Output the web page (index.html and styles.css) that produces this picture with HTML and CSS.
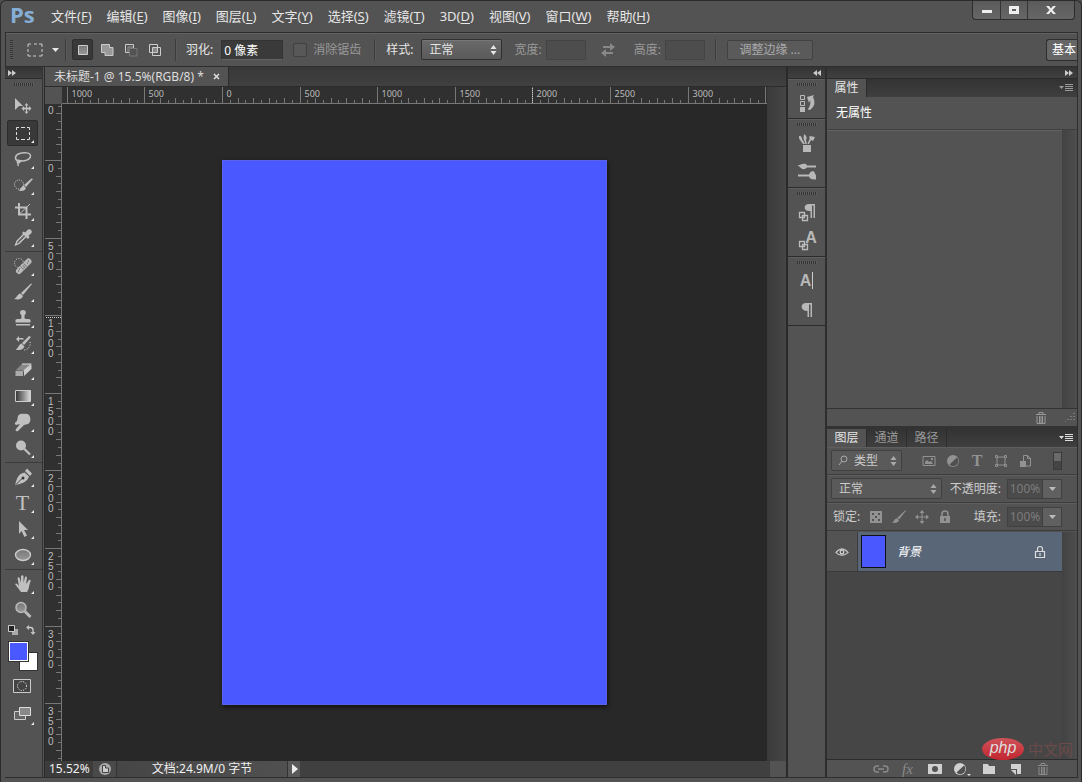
FILE: index.html
```html
<!DOCTYPE html>
<html lang="zh-CN">
<head>
<meta charset="utf-8">
<title>未标题-1 - Ps</title>
<link rel="stylesheet" href="styles.css">
</head>
<body>
<svg class="defs" aria-hidden="true">
  <defs>
    <symbol id="updown" viewBox="0 0 7 10"><path d="M3.5 0L6.5 4H.5zM3.5 10L.5 6h6z"/></symbol>
    <symbol id="down" viewBox="0 0 7 4"><path d="M0 0h7L3.500 4z"/></symbol>
    <symbol id="forward" viewBox="0 0 8 6"><path d="M0 0l4 3-4 3zM4 0l4 3-4 3z"/></symbol>
    <symbol id="panelmenu" viewBox="0 0 14 9"><path d="M0 2h5L2.500 5zM6 0h8v1H6zM6 2h8v1H6zM6 4h8v1H6zM6 6h8v1H6z"/></symbol>
    <symbol id="trash" viewBox="0 0 12 13"><path d="M1 3.500h10M4 3V1.500h4V3M2 5v7.500h8V5M4.500 5v7M6 5v7M7.500 5v7" fill="none" stroke="currentColor"/></symbol>
    <symbol id="brush" viewBox="0 0 20 20"><path d="M19 2L10 13l-2-2L18 1.500zM7.500 11.500l2.500 2.500c-1 3-4 4-9 3 3-1 3-5 6.500-5.500z"/></symbol>
    <symbol id="lock" viewBox="0 0 12 14"><path d="M3 6V4a3 3 0 0 1 6 0v2" fill="none" stroke="currentColor" stroke-width="1.500"/><path d="M1 6h10v7H1zm4.200 2v3h1.600V8z" fill-rule="evenodd"/></symbol>
    <symbol id="move4" viewBox="0 0 14 14"><path d="M7 0l2.500 3h-2v3.500H11v-2L14 7l-3 2.500v-2H7.500V11h2L7 14l-2.500-3h2V7.500H3v2L0 7l3-2.500v2h3.500V3h-2z"/></symbol>
    <symbol id="adjust" viewBox="0 0 14 14"><circle cx="7" cy="7" r="6"/><path d="M3.500 10.500A5 5 0 0 0 11 3.500z" class="hole"/></symbol>
    <linearGradient id="fade"><stop offset="0" stop-color="#333"/><stop offset="1" stop-color="#ddd"/></linearGradient>
    <linearGradient id="gray" x2="0" y2="1"><stop offset="0" stop-color="#777"/><stop offset="1" stop-color="#999"/></linearGradient>
  </defs>
</svg>
<div class="window">
  <header class="titlebar">
    <span class="logo">Ps</span>
    <nav class="menu">
      <button>文件(<u>F</u>)</button><button>编辑(<u>E</u>)</button><button>图像(<u>I</u>)</button><button>图层(<u>L</u>)</button><button>文字(<u>Y</u>)</button><button>选择(<u>S</u>)</button><button>滤镜(<u>T</u>)</button><button>3D(<u>D</u>)</button><button>视图(<u>V</u>)</button><button>窗口(<u>W</u>)</button><button>帮助(<u>H</u>)</button>
    </nav>
    <div class="winbuttons">
      <button aria-label="最小化"><svg width="12" height="10"><path d="M1 5h10v3H1z"/></svg></button>
      <button aria-label="最大化"><svg width="12" height="10"><path d="M1 1h10v8H1zm3 3v2h4V4z" fill-rule="evenodd"/></svg></button>
      <button class="close" aria-label="关闭"><svg width="12" height="10"><path d="M1 1h3l2 2.500L8 1h3L7.500 5 11 9H8L6 6.500 4 9H1l3.500-4z"/></svg></button>
    </div>
  </header>

  <div class="options">
    <span class="vgrip"></span>
    <button class="preset" aria-label="选框工具"><svg width="16" height="14"><path d="M1 4V1h3M7 1h3M12 1h3v3M15 6v3M15 11v2h-3M9 13H6M4 13H1v-2M1 9V6" fill="none" stroke="#ccc"/></svg><svg width="7" height="4"><use href="#down"/></svg></button>
    <span class="vsep"></span>
    <div class="modes">
      <button class="pressed" aria-label="新选区"><svg width="14" height="14"><path d="M2.500 2.500h9v9h-9z" fill="url(#gray)" stroke="#ccc"/></svg></button>
      <button aria-label="添加到选区"><svg width="14" height="14"><path d="M1.500 1.500h8v3h3.500v8H5v-3H1.500z" fill="#999" stroke="#ccc"/></svg></button>
      <button aria-label="从选区减去"><svg width="14" height="14"><path d="M5 9.500H1.500v-8h8V5" fill="none" stroke="#ccc"/><path d="M5.500 5.500H13v7.500H5.500z" fill="none" stroke="#777"/><path d="M4 9V4h5" stroke="#999" fill="none"/></svg></button>
      <button aria-label="与选区交叉"><svg width="14" height="14"><path d="M1.500 1.500h8v8h-8zM4.500 4.500h8v8h-8z" fill="none" stroke="#ccc"/><path d="M5 5h4v4H5z" fill="#888"/></svg></button>
    </div>
    <span class="vsep"></span>
    <label class="feather">羽化: <input type="text" value="0 像素"></label>
    <label class="check dim"><input type="checkbox" disabled> 消除锯齿</label>
    <span class="vsep"></span>
    <label class="style">样式: <span class="select"><select><option>正常</option></select><svg width="7" height="10"><use href="#updown"/></svg></span></label>
    <label class="dim size">宽度: <input type="text" disabled></label>
    <button class="swap" aria-label="互换" disabled><svg width="16" height="14"><path d="M3 3h7V0l5 4-5 4V5H3zM13 9H6V6L1 10l5 4v-3h7z"/></svg></button>
    <label class="dim size">高度: <input type="text" disabled></label>
    <span class="vsep"></span>
    <button class="refine" disabled>调整边缘 ...</button>
    <button class="workspace">基本</button>
  </div>

  <main class="body">
    <aside class="tools">
      <div class="strip"><svg width="8" height="6"><use href="#forward"/></svg></div>
      <span class="hgrip"></span>
      <div class="group">
        <button class="tool plain" aria-label="移动"><svg viewBox="0 0 20 20"><path d="M2 1l8 8H6l-4 4z"/><path d="M13.500 6l2 2.500H14v2h2V9l2.500 2.500L16 14v-1.500h-2v2h1.500l-2 2.500-2-2.500H13v-2h-2V14l-2.500-2.500L11 9v1.500h2v-2h-1.500z"/></svg></button>
        <button class="tool on" aria-label="矩形选框"><svg viewBox="0 0 20 20"><path d="M3.500 7V4.500H6M8 4.500h4M14 4.500h2.500V7M16.500 9v3M16.500 14v2.500H14M12 16.500H8M6 16.500H3.500V14M3.500 12V9" fill="none" stroke="#ddd"/></svg></button>
        <button class="tool" aria-label="套索"><svg viewBox="0 0 20 20"><path d="M5 12C1 10 2 6 6.500 4.500s11-1 11 2.500S11 13 6.500 11.500C4 10.500 4 13 5.500 13.500S8 12 5 12c-2 .5 1 3 0 5" fill="none" stroke="#c0c0c0" stroke-width="1.500"/></svg></button>
        <button class="tool" aria-label="快速选择"><svg viewBox="0 0 20 20"><circle cx="6" cy="9.500" r="4.500" fill="none" stroke="#ddd" stroke-dasharray="1 1.300"/><path d="M20 4l-7 8-2-2 7.500-6.500zM10.500 10.500l2.500 2.500c-1 3-4 3.500-8 2.500 3-.5 3-4 5.500-5z"/></svg></button>
        <button class="tool" aria-label="裁剪"><svg viewBox="0 0 20 20"><path d="M6 2v11.500h12M2 6.500h11.500V18" fill="none" stroke="#c0c0c0" stroke-width="2"/><path d="M6 13.500L17 3" stroke="#c0c0c0"/></svg></button>
        <button class="tool" aria-label="吸管"><svg viewBox="0 0 20 20"><path d="M11 7L4 14l-1.500 4L6 16.500l7-7" fill="#666" stroke="#ccc" stroke-width="1.200"/><path d="M9 6l1.500-1.500 2 1C14 3 16 1 18 3s0 4-2.500 5.500l1 1.500L15 12z"/></svg></button>
      </div>
      <div class="group">
        <button class="tool" aria-label="污点修复画笔"><svg viewBox="0 0 20 20"><circle cx="6" cy="7" r="4.500" fill="none" stroke="#ddd" stroke-dasharray="1 1.500"/><path d="M6 15L15.500 5.500" stroke="#b8b8b8" stroke-width="6" stroke-linecap="round"/><path d="M7.500 10.500l3.500 3M10.500 7.500l3.500 3" stroke="#777"/><path d="M5 15h1M15 5h1M10 10h1M11 11h1M14 7h1M6 13h1" stroke="#555"/></svg></button>
        <button class="tool" aria-label="画笔"><svg viewBox="0 0 20 20"><use href="#brush"/></svg></button>
        <button class="tool" aria-label="仿制图章"><svg viewBox="0 0 20 20"><path d="M8.500 10V7.500C6 5 7 2 10 2s4 3 1.500 5.500V10C12 12 17 10 17.500 12v2.500h-15V12C3 10 8 12 8.500 10zM3 16h14v1.500H3z"/></svg></button>
        <button class="tool" aria-label="历史记录画笔"><svg viewBox="0 0 20 20"><path d="M18 3l-7 8-2-2 7-7zM8.500 9.500l3 3c-2 4-5 4-9 3 3-1 3-5 6-6zM3 5l3-3v2h4l1 1.500H6V8z"/><path d="M17 8c1 4-2 8-6 8" fill="none" stroke="#ddd" stroke-dasharray="1 1.500"/></svg></button>
        <button class="tool" aria-label="橡皮擦"><svg viewBox="0 0 20 20"><path d="M9 4h9l-7 6.500H2.500z" fill="#888"/><path d="M2.500 11H10v5H2.500z" fill="#aaa"/><path d="M11 10.500L18.500 4.500V9L11 16z" fill="#ccc"/><path d="M9 4h9.200M10.500 10.800l7.700-6.500" stroke="#ddd" fill="none"/></svg></button>
        <button class="tool" aria-label="渐变"><svg viewBox="0 0 20 20"><path d="M2.500 4.500h15v11h-15z" fill="url(#fade)" stroke="#ccc"/></svg></button>
        <button class="tool" aria-label="涂抹"><svg viewBox="0 0 20 20"><path d="M5 4c2-3 5-2 6-2 3-1 6 1 6 3 1 3 0 6-2 7l-4 1-6 6c-2 1-3-1-2-2l4-5-4 1c-2-1-1-3 1-4z"/></svg></button>
        <button class="tool" aria-label="减淡"><svg viewBox="0 0 20 20"><circle cx="8" cy="7.500" r="5"/><path d="M11 10.500l6 6" stroke="#c0c0c0" stroke-width="2.200"/></svg></button>
      </div>
      <div class="group">
        <button class="tool" aria-label="钢笔"><svg viewBox="0 0 20 20"><path d="M11.500 5.500l4.500 4C14 15 10 16 2 18.500 4 11 5 7 11.500 5.500zM12 4l2-2.500 5 5L17 9z"/><path d="M2 18.500l7-7" stroke="#444"/><circle cx="10" cy="11" r="1.500" fill="#333"/></svg></button>
        <button class="tool letter" aria-label="文字"><span>T</span></button>
        <button class="tool" aria-label="路径选择"><svg viewBox="0 0 20 20"><path d="M6 2l9 9h-4l3 5.500-2.500 1.500-3-6L6 15z"/></svg></button>
        <button class="tool" aria-label="椭圆"><svg viewBox="0 0 20 20"><ellipse cx="10" cy="10" rx="7.500" ry="5.500" fill="url(#gray)" stroke="#ccc" stroke-width="1.300"/></svg></button>
      </div>
      <div class="group last">
        <button class="tool" aria-label="抓手"><svg viewBox="0 0 20 20"><path d="M8 18c-2-3-4-5-6-8 1-1 2-1 4 2L4.500 4c1-1 2-1 2.500 1l1 4V2c1-1 2-1 2.500 0V9l1.500-6c1-1 2 0 2 1L13 10l3-4c1-.5 2 0 1.500 1.500-2 5-1 7-3.500 10.500z"/></svg></button>
        <button class="tool plain" aria-label="缩放"><svg viewBox="0 0 20 20"><circle cx="8" cy="7.500" r="5" fill="url(#gray)" stroke="#bbb" stroke-width="1.500"/><path d="M12 11.500l5.500 5.500" stroke="#bbb" stroke-width="3"/></svg></button>
      </div>
      <div class="mini">
        <button aria-label="默认颜色"><svg width="12" height="12"><path d="M5 5h6v6H5z" fill="#aaa"/><path d="M1.500 1.500h6v6h-6z" fill="#222" stroke="#ccc"/></svg></button>
        <button aria-label="切换颜色"><svg width="12" height="12"><path d="M3 3.500h2.500Q8 3.500 8 6v2" fill="none" stroke="#ccc" stroke-width="1.300"/><path d="M4 1v5L1 3.500zM5.500 8h5L8 11z"/></svg></button>
      </div>
      <div class="swatches"><button class="bg" aria-label="背景色"></button><button class="fg" aria-label="前景色"></button></div>
      <button class="extra" aria-label="快速蒙版"><svg width="18" height="14"><path d="M.5 .5h17v13H.5z" fill="#444" stroke="#ccc"/><circle cx="9" cy="7" r="4.500" fill="none" stroke="#fff" stroke-dasharray="1 1.400"/></svg></button>
      <button class="tool screen" aria-label="屏幕模式"><svg viewBox="0 0 20 20"><path d="M1.500 7.500h11v8h-11z" fill="#666" stroke="#ccc"/><path d="M6.500 3.500h11v8h-11z" fill="#888" stroke="#ddd"/></svg></button>
    </aside>

    <section class="document">
      <div class="doctabs"><div class="doctab"><span>未标题-1 @ 15.5%(RGB/8) *</span><button aria-label="关闭文档"><svg width="7" height="7"><path d="M1 1l5 5M6 1L1 6" stroke="#ddd" stroke-width="1.500"/></svg></button></div></div>
      <div class="stage">
        <div class="corner"></div>
        <svg class="ruler across" id="across"></svg>
        <svg class="ruler along" id="along"></svg>
        <div class="canvas"><div class="artboard" id="artboard"></div></div>
        <div class="vscroll"></div>
      </div>
      <footer class="status">
        <span class="zoom">15.52%</span>
        <button class="info" aria-label="文档信息"><svg width="14" height="14"><circle cx="7" cy="7" r="6" fill="#aaa"/><path d="M4.500 3.500h3v2.500h3v4.500h-6z" fill="#ccc" stroke="#444"/></svg></button>
        <span class="docsize">文档:24.9M/0 字节</span>
        <button class="more" aria-label="更多"><svg width="7" height="10"><path d="M1 0l6 5-6 5z" fill="#eee"/></svg></button>
        <span class="hscroll"></span><span class="size-corner"></span>
      </footer>
    </section>

    <aside class="dock">
      <div class="strip"><svg class="flip" width="8" height="6"><use href="#forward"/></svg></div>
      <div class="dockgroup"><span class="hgrip"></span>
        <button aria-label="历史记录"><svg viewBox="0 0 20 20"><path d="M3.500 2.500h4v4h-4zM3.500 8.500h4v4h-4z" fill="none" stroke="#bbb"/><path d="M3 14h5v5H3zM10 4l7-2-1 2c3 6 1 10-3 13-2 0-2-1-2-1 2-3 3-6 2-9l-1 3z"/></svg></button></div>
      <div class="dockgroup"><span class="hgrip"></span>
        <button aria-label="画笔预设"><svg viewBox="0 0 20 20"><path d="M6 12h8v7H6zM2 3c3 0 3 2 3 3l3 5H6L3 7C2 6 2 5 2 3zM7 1c3 2 3 4 2 6l1 4H8.500L7 7C6 5 7 3 7 1zM18 4l-2 4-2-1-2 4h-1.500l2-5V3z"/></svg></button>
        <button aria-label="画笔"><svg viewBox="0 0 20 20"><path d="M0 3c3 1 4-2 9-1l1 1.500h9v2h-9L8 7C4 8 3 4 0 3zM1 12.500h11c1-3 3-4 5-3l2 4v4c-3 0-6 0-7-3H1z"/></svg></button></div>
      <div class="dockgroup"><span class="hgrip"></span>
        <button aria-label="段落样式"><svg viewBox="0 0 20 20"><path d="M12 2h6v14h-1.500V3.500H15V16h-1.500V9C6 10 6 2 12 2z"/><path d="M2.500 10.500h5v5h-5zM5.500 13.500h5v5h-5z" fill="none" stroke="#bbb" stroke-width="1.300"/></svg></button>
        <button aria-label="字符样式"><span class="bigA">A</span><svg viewBox="0 0 20 20"><path d="M2.500 10.500h5v5h-5zM5.500 13.500h5v5h-5z" fill="none" stroke="#bbb" stroke-width="1.300"/></svg></button></div>
      <div class="dockgroup"><span class="hgrip"></span>
        <button class="char" aria-label="字符">A<i></i></button>
        <button aria-label="段落"><svg viewBox="0 0 20 20"><path d="M9 3h6v14h-1.500V4.500H12V17h-1.500v-6C3 11 3 3 9 3z"/></svg></button></div>
    </aside>

    <aside class="panels">
      <div class="strip"><svg width="8" height="6"><use href="#forward"/></svg></div>
      <section class="panel props">
        <div class="tabs"><button class="active">属性</button><span class="pm"><svg width="14" height="9"><use href="#panelmenu"/></svg></span></div>
        <div class="none">无属性</div>
        <div class="scrollarea"><i></i></div>
        <div class="propfoot"><button aria-label="删除"><svg width="12" height="13"><use href="#trash"/></svg></button><svg width="11" height="9"><path d="M9 0v2M6 3v2M9 3v2M3 6v2M6 6v2M9 6v2M0 8v1" stroke="#888" stroke-width="1.500" stroke-dasharray="1"/></svg></div>
      </section>
      <section class="panel layers">
        <div class="tabs"><button class="active">图层</button><button>通道</button><button>路径</button><span class="pm lit"><svg width="14" height="9"><use href="#panelmenu"/></svg></span></div>
        <div class="row filter">
          <span class="select kind"><svg class="mag" width="10" height="11"><circle cx="6" cy="4" r="3" fill="none" stroke="#aaa"/><path d="M4 6L1 10" stroke="#aaa"/></svg><select aria-label="类型"><option>类型</option></select><svg width="7" height="10"><use href="#updown"/></svg></span>
          <div class="filters">
            <button aria-label="像素"><svg width="14" height="14"><path d="M1 2.500h12v9H1z" fill="none" stroke="currentColor"/><path d="M3 10V8l2-2 2 2 2-1 2 3zM9 4h2v2H9z"/></svg></button>
            <button aria-label="调整"><svg width="14" height="14"><use href="#adjust"/></svg></button>
            <button class="serif" aria-label="文字">T</button>
            <button aria-label="形状"><svg width="14" height="14"><path d="M3 3h8v8H3zM1.500 1.500h2v2h-2zM10.500 1.500h2v2h-2zM1.500 10.500h2v2h-2zM10.500 10.500h2v2h-2z" fill="none" stroke="currentColor"/></svg></button>
            <button aria-label="智能对象"><svg width="14" height="14"><path d="M5.500 7V1.500h4l3 3V12H7M9.500 1.500v3h3" fill="none" stroke="currentColor"/><path d="M2 7h6v6H2z"/></svg></button>
          </div>
          <button class="toggle" aria-label="切换滤镜"></button>
        </div>
        <div class="row">
          <span class="select blend"><select aria-label="混合模式"><option>正常</option></select><svg width="7" height="10"><use href="#updown"/></svg></span>
          <label class="pct">不透明度: <input type="text" value="100%" disabled></label><button class="drop" aria-label="不透明度滑块"><svg width="7" height="4"><use href="#down"/></svg></button>
        </div>
        <div class="row">
          <span class="locktext">锁定:</span>
          <div class="locks">
            <button aria-label="透明像素"><svg width="14" height="14"><path d="M1 1h12v12H1zM3 3v2h2V3zM9 3v2h2V3zM6 6v2h2V6zM3 9v2h2V9zM9 9v2h2V9z" fill-rule="evenodd"/></svg></button>
            <button aria-label="图像像素"><svg width="16" height="16"><use href="#brush"/></svg></button>
            <button aria-label="位置"><svg width="14" height="14"><use href="#move4"/></svg></button>
            <button aria-label="全部"><svg width="12" height="14"><use href="#lock"/></svg></button>
          </div>
          <label class="pct">填充: <input type="text" value="100%" disabled></label><button class="drop" aria-label="填充滑块"><svg width="7" height="4"><use href="#down"/></svg></button>
        </div>
        <div class="list">
          <div class="layer">
            <button class="eye" aria-label="可见性"><svg width="14" height="10"><path d="M1 5.500Q7-1.500 13 5.500 7 11 1 5.500z" fill="#444" stroke="#bbb" stroke-width="1.300"/><circle cx="7" cy="5" r="2.500"/><circle cx="7" cy="5" r="1" fill="#333"/></svg></button>
            <div class="thumb"></div><em>背景</em>
            <svg class="lk" width="12" height="14"><path d="M3.500 6V4a2.500 2.500 0 0 1 5 0v2M1.500 6.500h9v6h-9zM6 8v3" fill="none" stroke="currentColor" stroke-width="1.200"/></svg>
          </div>
          <i></i>
        </div>
        <div class="layerfoot">
          <button class="off" aria-label="链接"><svg width="16" height="10"><path d="M6 8H4a3 3 0 0 1 0-6h2M10 2h2a3 3 0 0 1 0 6h-2M5 5h6" fill="none" stroke="currentColor" stroke-width="1.500"/></svg></button>
          <button class="off fx" aria-label="样式">fx</button>
          <button aria-label="蒙版"><svg width="14" height="12"><path d="M0 1h14v10H0zM7 3a3 3 0 1 0 0 6 3 3 0 0 0 0-6z" fill-rule="evenodd"/></svg></button>
          <button class="sub" aria-label="调整图层"><svg width="14" height="14"><use href="#adjust"/></svg></button>
          <button aria-label="新建组"><svg width="14" height="12"><path d="M1 1h5l1 2h6v8H1z"/></svg></button>
          <button aria-label="新建图层"><svg width="12" height="12"><path d="M1 1h10v10H7V6H1zM1 7h5v5z"/></svg></button>
          <button class="off" aria-label="删除图层"><svg width="12" height="13"><use href="#trash"/></svg></button>
        </div>
        <div class="watermark"><span>php</span><b>中文网</b></div>
      </section>
    </aside>
  </main>
</div>
<script src="script.js"></script>
</body>
</html>
```
FILE: styles.css
```css
* { box-sizing: border-box; }
body { margin: 0; background: #4f4f4f; color: #e6e6e6; font: 12px/16px "Noto Sans", "Noto Sans CJK SC", sans-serif; }
button, input, select { font: inherit; color: inherit; margin: 0; padding: 0; border: 0; background: none; border-radius: 0; }
button { display: flex; align-items: center; justify-content: center; }
select { appearance: none; outline: 0; opacity: 1; }
svg { fill: currentColor; display: block; flex: none; }
.defs { position: absolute; width: 0; height: 0; }
.hole { fill: #505050; }
.window { display: flex; flex-direction: column; height: 100vh; min-height: 600px; border: 1px solid #2b2b2b; border-width: 1px 1px 0; border-radius: 6px 6px 0 0; padding: 0 2px 4px 3px; overflow: hidden; background: #535353; }

.titlebar { display: flex; height: 31px; align-items: stretch; }
.logo { width: 40px; padding-left: 6px; font: bold 22px/27px "Open Sans", sans-serif; color: #85aed6; }
.menu { display: flex; flex: 1; }
.menu button { padding: 0 8px 1px 7px; font-size: 13px; white-space: nowrap; }
.menu u { text-underline-offset: 2px; }
.winbuttons { display: flex; height: 19px; margin-right: 4px; border: 1px solid #2c2c2c; border-top: 0; border-radius: 0 0 4px 4px; background: linear-gradient(#5b5b5b, #666); color: #eee; }
.winbuttons button { width: 27px; }
.winbuttons button + button { border-left: 1px solid #333; }
.winbuttons .close { width: 47px; }

.options { display: flex; align-items: center; height: 35px; margin: 0 1px; border: 1px solid #2e2e2e; border-right-color: #333; box-shadow: inset 0 1px #626262; overflow: hidden; white-space: nowrap; }
.vgrip { width: 3px; height: 20px; margin: 0 14px 0 4px; background: repeating-linear-gradient(#333 0 1px, #5c5c5c 1px 2px); }
.preset { gap: 9px; }
.vsep { width: 1px; height: 22px; background: #3c3c3c; box-shadow: 1px 0 #5a5a5a; margin: 0 6px; }
.modes { display: flex; gap: 3px; margin-right: 4px; }
.modes button { width: 21px; height: 21px; }
.modes .pressed { background: #393939; border: 1px solid #2e2e2e; border-radius: 2px; }
.options label { display: flex; align-items: center; gap: 8px; }
.options input[type=text] { height: 20px; background: #3a3a3a; border: 1px solid #333; border-bottom-color: #626262; padding-left: 2px; color: #fff; }
.feather { margin-left: 4px; }
.feather input { width: 62px; }
.options .check { margin: 0 7px 0 10px; gap: 6px; }
.check input { appearance: none; width: 14px; height: 14px; border: 1px solid #404040; border-radius: 2px; background: #585858; }
.dim { color: #999; }
.style { margin-left: 5px; }
.select { display: flex; align-items: center; height: 21px; border: 1px solid #303030; border-radius: 2px; background: linear-gradient(#6a6a6a, #5a5a5a); box-shadow: inset 0 1px #777; padding: 0 4px 0 7px; }
.select select { flex: 1; min-width: 0; }
.style .select { width: 81px; }
.options .size { margin-left: 12px; gap: 4px; }
.options .size input { width: 40px; background: #4d4d4d; border-color: #444; }
.swap { color: #888; margin: 0 6px 0 14px; }
.options .size + .vsep { margin: 0 11px 0 10px; }
.refine { width: 86px; height: 20px; border: 1px solid #414141; border-radius: 2px; background: #5a5a5a; color: #aaa; }
.workspace { width: 31px; height: 22px; margin-left: auto; flex: none; padding-left: 5px; justify-content: flex-start; border: 1px solid #2e2e2e; border-right: 0; border-radius: 3px 0 0 3px; background: #666; color: #fff; }

.body { display: flex; flex: 1; min-height: 0; margin: 0 1px; border: solid #2e2e2e; border-width: 0 1px 1px 0; }
.strip { display: flex; align-items: center; height: 12px; flex: none; background: linear-gradient(#343434, #404040); border-bottom: 1px solid #2b2b2b; color: #ccc; }
.hgrip { display: block; width: 20px; height: 3px; margin: 4px auto 2px; flex: none; background: repeating-linear-gradient(90deg, #333 0 1px, #5f5f5f 1px 2px); }

.tools { width: 38px; display: flex; flex-direction: column; flex: none; border-right: 1px solid #333; color: #c0c0c0; }
.tools .strip { padding-left: 3px; }
.group { padding: 4px 2px 1px; border-bottom: 1px solid #3a3a3a; }
.tools .hgrip + .group { padding-top: 6px; }
.group + .group { padding-top: 1px; }
.group.last { border: 0; }
.tool { position: relative; width: 31px; height: 26px; border: 1px solid transparent; border-radius: 2px; }
.tool svg { width: 20px; height: 20px; }
.tool::after { content: ""; position: absolute; right: 3px; bottom: 2px; width: 0; height: 0; border-top: 3px solid transparent; border-right: 3px solid #eee; }
.tool.plain::after { display: none; }
.tool.on { background: #393939; border-color: #2c2c2c; }
.letter { font: 22px/26px "Liberation Serif", serif; }
.mini { display: flex; gap: 6px; padding: 0 2px; }
.swatches { display: grid; width: 29px; height: 29px; margin: 6px 0 0 4px; }
.swatches button { grid-area: 1 / 1; width: 19px; height: 19px; border: 1px solid #333; }
.swatches .fg { background: #4a58ff; border-color: #fff; outline: 1px solid #333; }
.swatches .bg { background: #fff; place-self: end; }
.extra { margin: 8px 0 0 8px; width: 18px; }
.screen { margin: 7px 0 0 2px; height: 28px; }

.document { flex: 1; min-width: 0; display: flex; flex-direction: column; border: solid #2a2a2a; border-width: 0 2px 0 1px; margin-left: 1px; }
.doctabs { display: flex; height: 20px; flex: none; background: linear-gradient(#383838, #404040); border-bottom: 1px solid #2c2c2c; }
.doctab { display: flex; align-items: center; gap: 9px; padding: 0 8px 0 9px; background: #535353; border-right: 1px solid #2c2c2c; font-size: 12px; color: #ddd; white-space: nowrap; }
.stage { flex: 1; min-height: 0; display: grid; grid-template: 17px minmax(0, 1fr) / 17px minmax(0, 1fr) 19px; }
.corner { background: #535353; }
.ruler { width: 100%; height: 100%; background: #303030; overflow: hidden; font: 10px "Liberation Sans", sans-serif; fill: #bbb; }
.ruler path { stroke: #777; fill: none; shape-rendering: crispEdges; }
.ruler .cursor { stroke: #ccc; stroke-dasharray: 1 1; }
.across { font: 9px "Noto Sans", sans-serif; }
.along { grid-area: 2 / 1; }
.canvas { grid-area: 2 / 2; background: #282828; display: flex; align-items: center; justify-content: center; overflow: hidden; }
.artboard { width: 385px; aspect-ratio: 385 / 545; flex: none; background: #4a58ff; border: 1px solid #5a62e8; box-shadow: 1px 2px 4px #111; }
.vscroll { grid-area: 1 / 3 / 3 / 4; background: linear-gradient(90deg, #3a3a3a, #464646); }
.status { display: flex; height: 16px; flex: none; background: #404040; color: #f0f0f0; white-space: nowrap; }
.zoom { width: 48px; padding-left: 4px; background: #3c3c3c; }
.info { width: 24px; background: #4a4a4a; border-right: 1px solid #333; }
.docsize { width: 171px; text-align: center; background: linear-gradient(90deg, #464646, #505050); border-right: 1px solid #333; }
.more { width: 12px; background: #5a5a5a; }
.hscroll { flex: 1; }
.size-corner { width: 16px; background: #535353; }

.dock { width: 39px; flex: none; border-right: 2px solid #2e2e2e; color: #b8b8b8; }
.dock .strip { justify-content: flex-end; padding-right: 4px; }
.flip { transform: scaleX(-1); }
.dockgroup { padding-bottom: 1px; border-bottom: 1px solid #2c2c2c; box-shadow: inset 0 1px #5f5f5f; display: flow-root; }
.dockgroup button { width: 37px; height: 29px; display: grid; place-items: center; }
.dockgroup svg { width: 20px; height: 20px; grid-area: 1 / 1; }
.bigA { grid-area: 1 / 1; font: bold 16px/20px "Liberation Sans", sans-serif; padding: 0 0 5px 9px; }
.dockgroup .char { display: flex; gap: 1px; font: bold 16px "Liberation Sans", sans-serif; }
.char i { width: 1px; height: 17px; background: #ccc; }

.panels { width: 250px; flex: none; display: flex; flex-direction: column; }
.panels .strip { justify-content: flex-end; padding-right: 4px; }
.panel { display: flex; flex-direction: column; min-height: 0; }
.props { flex: 347 1 0; }
.layers { flex: 348 1 0; position: relative; border-top: 3px solid #333; }
.tabs { display: flex; flex: none; height: 18px; background: linear-gradient(#333, #3f3f3f); color: #999; }
.tabs button { width: 40px; border-right: 1px solid #2c2c2c; }
.tabs .active { background: #535353; color: #e6e6e6; }
.pm { margin: 5px 4px 0 auto; }
.lit { color: #ddd; }
.none { padding: 8px 9px; height: 33px; flex: none; border-bottom: 1px solid #404040; color: #fff; }
.scrollarea, .list { flex: 1; min-height: 0; display: flex; box-shadow: inset 0 1px #626262; }
.scrollarea i, .list > i { width: 15px; margin-left: auto; background: linear-gradient(90deg, #424242, #4e4e4e); }
.propfoot { display: flex; flex: none; align-items: center; justify-content: flex-end; gap: 18px; height: 18px; padding-right: 1px; border-top: 1px solid #333; color: #999; }
.row { display: flex; flex: none; align-items: center; height: 28px; padding: 0 15px 0 4px; border-bottom: 1px solid #3d3d3d; box-shadow: inset 0 1px #5e5e5e; color: #ccc; white-space: nowrap; }
.row .select { border-color: #404040; background: #5a5a5a; box-shadow: none; }
.row .select svg { color: #aaa; }
.row .kind { width: 71px; padding: 0 4px 0 6px; gap: 6px; }
.row .blend { width: 111px; }
.filters { display: flex; margin-left: 15px; color: #929292; }
.filters button { width: 24px; height: 20px; }
.serif { font: bold 16px "Liberation Serif", serif; }
.toggle { width: 9px; height: 18px; margin-left: auto; border: 1px solid #3a3a3a; background: linear-gradient(#6a6a6a 50%, #444 50%); }
.pct { display: flex; align-items: center; gap: 6px; margin-left: auto; }
.pct input { width: 36px; height: 20px; border: 1px solid #404040; background: #4b4b4b; color: #7c7c7c; text-align: center; }
.drop { width: 19px; height: 20px; border: 1px solid #404040; border-left: 0; background: #606060; color: #bbb; }
.locktext { margin-left: 2px; }
.locks { display: flex; margin-left: 4px; color: #929292; }
.locks button { width: 23px; height: 20px; }
.list { background: #464646; margin-top: 1px; }
.layer { display: flex; flex: 1; align-items: center; height: 40px; padding-right: 16px; background: #596678; border-bottom: 1px solid #3a3a3a; }
.eye { width: 31px; height: 39px; background: #535353; border-right: 1px solid #3c3c3c; color: #ccc; }
.thumb { width: 25px; height: 33px; margin: 0 11px 0 3px; border: 1px solid #111; background: #4a58ff; }
.layer em { color: #fff; }
.lk { margin-left: auto; color: #ddd; }
.layerfoot { display: flex; flex: none; align-items: center; justify-content: flex-end; height: 18px; padding-right: 21px; border-top: 1px solid #2c2c2c; color: #d0d0d0; }
.layerfoot button { width: 27px; height: 17px; }
.layerfoot .off { color: #8a8a8a; }
.fx { font: italic 15px/16px "Liberation Serif", serif; }
.sub::after { content: ""; align-self: flex-end; margin-bottom: 1px; border: 2px solid transparent; border-top-color: #ddd; border-bottom: 0; }
.watermark { position: absolute; right: 4px; bottom: 17px; display: flex; align-items: center; gap: 4px; }
.watermark span { width: 42px; height: 22px; border-radius: 50%; background: linear-gradient(#d0535a, #c22630); color: #ddd; text-align: center; font: italic 16px/19px "Liberation Sans", sans-serif; }
.watermark b { font-size: 15px; font-weight: 400; color: #6b4a4a; }
```
FILE: script.js
```js
// Draws both rulers, with zero at the artboard's top left corner.
const UNITS_WIDE = 2480;

function drawRuler(svg, vertical, cursorAt) {
  const art = document.getElementById("artboard").getBoundingClientRect();
  const box = svg.getBoundingClientRect();
  const zero = vertical ? art.top - box.top : art.left - box.left;
  const length = vertical ? box.height : box.width;
  const edge = 17;
  const step = (art.width / UNITS_WIDE) * 50;
  let ticks = "";
  let labels = "";
  for (let i = Math.ceil((-zero - 30) / step); zero + i * step < length; i++) {
    const at = Math.round(zero + i * step) + 0.5;
    const major = i % 10 === 0;
    const from = major ? 0 : edge - (i % 2 === 0 ? 6 : 4);
    ticks += vertical ? `M${from} ${at}H${edge}` : `M${at} ${from}V${edge}`;
    if (!major) continue;
    const text = String(Math.abs(i * 50));
    if (vertical) {
      [...text].forEach((digit, n) => {
        const y = at + 11 + n * 10;
        if (y > 5 && y < length) labels += `<text x="3" y="${y}">${digit}</text>`;
      });
    } else if (at > 0 && at + 24 < length) {
      labels += `<text x="${at + 4}" y="10">${text}</text>`;
    }
  }
  const line = vertical ? `M16.5 0V${length}` : `M0 16.5H${length}`;
  const mark = Math.round(zero + cursorAt) + 0.5;
  const cursor = vertical ? `M1 ${mark}H16` : `M${mark} 1V16`;
  svg.innerHTML = `<path d="${ticks}${line}"/><path class="cursor" d="${cursor}"/>${labels}`;
}

function draw() {
  drawRuler(document.getElementById("across"), false, 310);
  drawRuler(document.getElementById("along"), true, 157);
}

draw();
window.addEventListener("resize", draw);
```
